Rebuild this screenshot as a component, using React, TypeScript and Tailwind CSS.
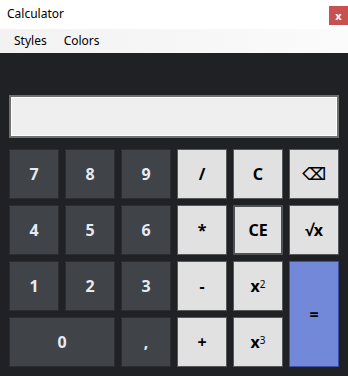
import React from "react";

const num =
  "flex items-center justify-center bg-[#404347] border border-[#2a2c2f] text-[#e4ebf3] font-bold text-[16px]";
const op =
  "flex items-center justify-center bg-[#e1e1e1] border border-[#555759] text-black font-bold text-[16px]";

export default function App() {
  return (
    <div
      className="w-[348px] h-[376px] flex flex-col overflow-hidden"
      style={{ fontFamily: '"Noto Sans", "Open Sans", sans-serif' }}
    >
      <div className="h-[29px] bg-white flex items-start justify-between shrink-0">
        <span className="text-[12px] text-black pl-[7px] pt-[6px] leading-[16px]">Calculator</span>
        <div className="mt-[6px] w-[19px] h-[19px] bg-[#c75050] flex items-center justify-center text-white font-bold text-[11px] leading-none">
          x
        </div>
      </div>
      <div className="h-[24px] bg-gradient-to-r from-[#f2f2f2] to-[#fbfbfb] flex items-center text-[12px] text-black shrink-0">
        <span className="pl-[14px]">Styles</span>
        <span className="pl-[17px]">Colors</span>
      </div>
      <div className="flex-1 bg-[#1f2124] px-[9px] pt-[42px]">
        <div className="h-[43px] border-2 border-[#707070] bg-[#efefef] shadow-[inset_0_0_0_1px_#ffffff]" />
        <div className="mt-[11px] grid grid-cols-[repeat(6,50px)] grid-rows-[repeat(4,50px)] gap-[6px]">
          <div className={num}>7</div>
          <div className={num}>8</div>
          <div className={num}>9</div>
          <div className={op}>/</div>
          <div className={op}>C</div>
          <div className={op}>
            <span style={{ fontFamily: '"DejaVu Sans", sans-serif' }} className="text-[17px] font-bold leading-none">⌫</span>
          </div>
          <div className={num}>4</div>
          <div className={num}>5</div>
          <div className={num}>6</div>
          <div className={op}>*</div>
          <div className="flex items-center justify-center bg-[#e1e1e1] border-2 border-[#4f5153] text-black font-bold text-[16px]">
            CE
          </div>
          <div className={op}>√x</div>
          <div className={num}>1</div>
          <div className={num}>2</div>
          <div className={num}>3</div>
          <div className={op}>-</div>
          <div className={op}>
            x<sup className="text-[10px] font-normal relative top-[-2px]">2</sup>
          </div>
          <div className="row-span-2 flex items-center justify-center bg-[#7289da] border border-[#3f4fa0] text-black font-bold text-[16px]">
            =
          </div>
          <div className={`${num} col-span-2`}>0</div>
          <div className={num}>,</div>
          <div className={op}>+</div>
          <div className={op}>
            x<sup className="text-[10px] font-normal relative top-[-2px]">3</sup>
          </div>
        </div>
      </div>
    </div>
  );
}
